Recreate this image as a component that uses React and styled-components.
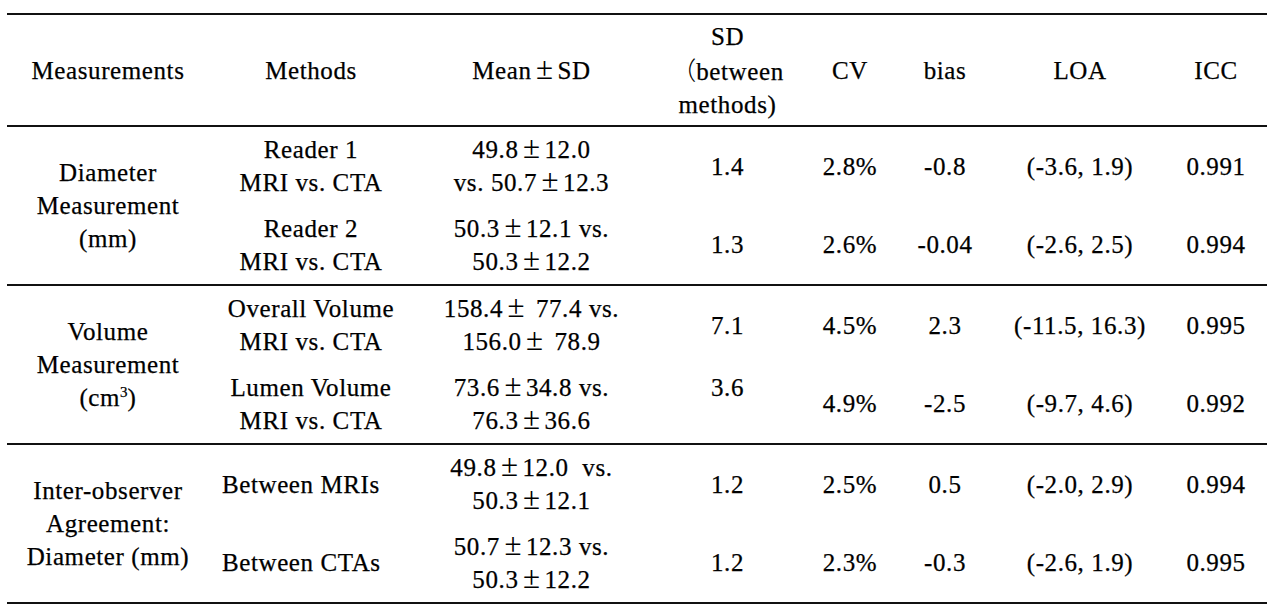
import React from 'react';
import styled, { createGlobalStyle } from 'styled-components';

const COLS = '202px 204px 237px 155px 90px 100px 170px 102px';

const GlobalStyle = createGlobalStyle`
  html, body {
    margin: 0;
    background: #fff;
  }
`;

const Page = styled.div`
  padding: 13px 0 0 7px;
  font-family: "Times New Roman", "Liberation Serif", "Noto Sans CJK SC", serif;
  font-size: 25px;
  letter-spacing: 0.6px;
  line-height: 33px;
  color: #000;
  -webkit-text-stroke: 0.25px #000;
`;

const Table = styled.div`
  width: 1260px;
  border-top: 2px solid #111;
`;

const HeadRow = styled.div`
  display: grid;
  grid-template-columns: ${COLS};
  height: 110px;
  border-bottom: 2px solid #111;
`;

const Section = styled.div`
  display: grid;
  grid-template-columns: ${COLS};
  grid-template-rows: repeat(2, 78.5px);
  border-bottom: 2px solid #111;
`;

const Cell = styled.div`
  display: flex;
  flex-direction: column;
  justify-content: center;
  align-items: ${({ $left }) => ($left ? 'flex-start' : 'center')};
  padding-left: ${({ $left }) => ($left ? '13px' : '0')};
  text-align: center;
  white-space: pre;
  grid-row: span ${({ $span }) => $span || 1};
`;

const Line = styled.span`
  display: block;
  min-height: 33px;
`;

const Pm = styled.span`
  display: inline-block;
  width: 26px;
  text-align: center;
  letter-spacing: 0;
  font-size: 31px;
  line-height: 0;
  -webkit-text-stroke: 0;
`;

const Sup = styled.sup`
  font-size: 15px;
  line-height: 0;
  vertical-align: 9px;
  letter-spacing: 0;
`;

const Paren = styled.span`
  font-family: "Noto Sans CJK SC", sans-serif;
  font-weight: 300;
  letter-spacing: 0;
  -webkit-text-stroke: 0;
`;

const pm = (a, b, pre = '', post = '') => (
  <>
    {pre}
    {a}
    <Pm>±</Pm>
    {b}
    {post}
  </>
);

const headers = [
  ['Measurements'],
  ['Methods'],
  [<>Mean<Pm>±</Pm>SD</>],
  ['SD', <><Paren>（</Paren>between</>, 'methods)'],
  ['CV'],
  ['bias'],
  ['LOA'],
  ['ICC'],
];

const sections = [
  {
    label: ['Diameter', 'Measurement', '(mm)'],
    rows: [
      {
        method: ['Reader 1', 'MRI vs. CTA'],
        mean: [pm('49.8', '12.0'), pm('50.7', '12.3', 'vs. ')],
        values: [['1.4'], '2.8%', '-0.8', '(-3.6, 1.9)', '0.991'],
      },
      {
        method: ['Reader 2', 'MRI vs. CTA'],
        mean: [pm('50.3', '12.1', '', ' vs.'), pm('50.3', '12.2')],
        values: [['1.3'], '2.6%', '-0.04', '(-2.6, 2.5)', '0.994'],
      },
    ],
  },
  {
    label: ['Volume', 'Measurement', <>(cm<Sup>3</Sup>)</>],
    rows: [
      {
        method: ['Overall Volume', 'MRI vs. CTA'],
        mean: [pm('158.4', ' 77.4', '', ' vs.'), pm('156.0', ' 78.9')],
        values: [['7.1'], '4.5%', '2.3', '(-11.5, 16.3)', '0.995'],
      },
      {
        method: ['Lumen Volume', 'MRI vs. CTA'],
        mean: [pm('73.6', '34.8', '', ' vs.'), pm('76.3', '36.6')],
        values: [['3.6', ''], '4.9%', '-2.5', '(-9.7, 4.6)', '0.992'],
      },
    ],
  },
  {
    label: ['Inter-observer', 'Agreement:', 'Diameter (mm)'],
    rows: [
      {
        method: ['Between MRIs'],
        left: true,
        mean: [pm('49.8', '12.0', '', '  vs.'), pm('50.3', '12.1')],
        values: [['1.2'], '2.5%', '0.5', '(-2.0, 2.9)', '0.994'],
      },
      {
        method: ['Between CTAs'],
        left: true,
        mean: [pm('50.7', '12.3', '', ' vs.'), pm('50.3', '12.2')],
        values: [['1.2'], '2.3%', '-0.3', '(-2.6, 1.9)', '0.995'],
      },
    ],
  },
];

const Lines = ({ items }) =>
  items.map((t, i) => <Line key={i}>{t}</Line>);

const App = () => (
  <Page>
    <GlobalStyle />
    <Table>
      <HeadRow>
        {headers.map((h, i) => (
          <Cell key={i}>
            <Lines items={h} />
          </Cell>
        ))}
      </HeadRow>
      {sections.map((s, si) => (
        <Section key={si}>
          <Cell $span={2}>
            <Lines items={s.label} />
          </Cell>
          {s.rows.map((r, ri) => (
            <React.Fragment key={ri}>
              <Cell $left={r.left}>
                <Lines items={r.method} />
              </Cell>
              <Cell>
                <Lines items={r.mean} />
              </Cell>
              <Cell>
                <Lines items={r.values[0]} />
              </Cell>
              {r.values.slice(1).map((v, vi) => (
                <Cell key={vi}>{v}</Cell>
              ))}
            </React.Fragment>
          ))}
        </Section>
      ))}
    </Table>
  </Page>
);

export default App;
